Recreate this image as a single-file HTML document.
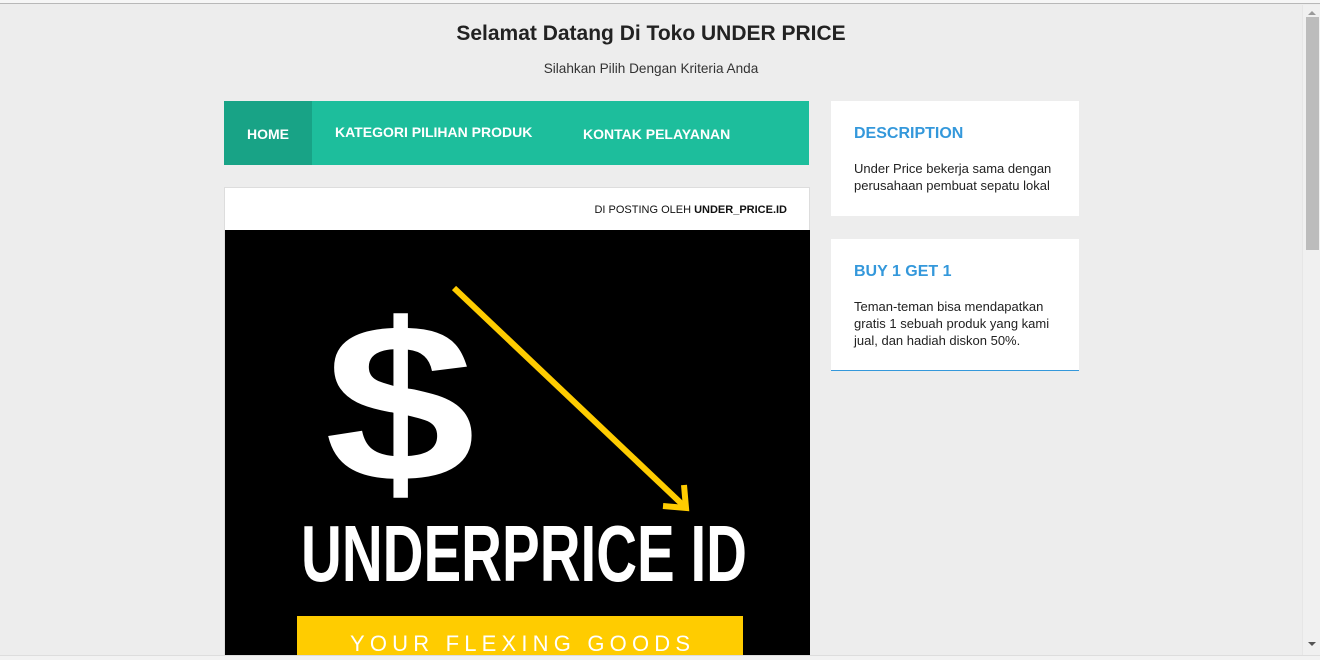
<!DOCTYPE html>
<html><head><meta charset="utf-8"><style>
*{margin:0;padding:0;box-sizing:border-box}
body{width:1320px;height:660px;overflow:hidden;background:#ededed;font-family:"Liberation Sans",Arial,sans-serif;position:relative}
.topbar{position:absolute;left:0;top:0;width:1320px;height:4px;background:#f6f6f6;border-bottom:1px solid #b8b8b8}
.abs{position:absolute}
h1{position:absolute;left:0;width:1302px;top:22px;text-align:center;font-size:21px;font-weight:bold;color:#222}
.sub{position:absolute;left:0;width:1302px;top:61px;text-align:center;font-size:13.6px;color:#333}
.nav{left:224px;top:101px;width:585px;height:64px;background:#1dbe9c;color:#fff;font-weight:bold;font-size:14px}
.nav span{position:absolute}
.home{left:0;top:0;width:88px;height:64px;background:#18a386}
.post{left:224px;top:187px;width:586px;height:470px;background:#fff;border:1px solid #ddd}
.side{background:#fff;left:831px;width:248px;padding:0 22px 0 23px}
.side h3{color:#3498db;font-size:16px;font-weight:bold;margin-top:24px}
.side p{font-size:13px;color:#222;line-height:17px;margin-top:17px}
.sb{left:1302px;top:5px;width:18px;height:650px;background:#f0f0f0;border-left:1px solid #e6e6e6}
</style></head><body>
<div class="topbar"></div>
<h1>Selamat Datang Di Toko UNDER PRICE</h1>
<div class="sub">Silahkan Pilih Dengan Kriteria Anda</div>
<div class="abs nav">
 <div class="abs home"></div>
 <span style="left:23px;top:25px">HOME</span>
 <span style="left:111px;top:23px">KATEGORI PILIHAN PRODUK</span>
 <span style="left:359px;top:25px">KONTAK PELAYANAN</span>
</div>
<div class="abs post">
 <div class="abs" style="right:22px;top:16px;font-size:11px;color:#111">DI POSTING OLEH <b>UNDER_PRICE.ID</b></div>
 <svg class="abs" style="left:0;top:42px" width="585" height="428" viewBox="0 0 585 428">
  <rect width="585" height="428" fill="#000"/>
  <line x1="229" y1="58" x2="459" y2="276" stroke="#ffcc00" stroke-width="6"/>
  <path d="M438 276 L461 278 L459 255" fill="none" stroke="#ffcc00" stroke-width="6"/>
  <text x="0" y="251" transform="translate(175,0) scale(1.2,1)" font-family="Liberation Sans" font-weight="bold" font-size="226" fill="#fff" text-anchor="middle">$</text>
  <text x="76" y="351" font-family="Liberation Sans Narrow,Liberation Sans" font-weight="bold" font-size="80" fill="#fff" textLength="446" lengthAdjust="spacingAndGlyphs">UNDERPRICE ID</text>
  <rect x="72" y="386" width="446" height="42" fill="#ffcc00"/>
  <text x="125" y="421" font-family="Liberation Sans" font-size="22" fill="#fff" textLength="340" lengthAdjust="spacing">YOUR FLEXING GOODS</text>
 </svg>
</div>
<div class="abs side" style="top:101px;height:115px"><h3>DESCRIPTION</h3><p>Under Price bekerja sama dengan perusahaan pembuat sepatu lokal</p></div>
<div class="abs side" style="top:239px;height:132px;border-bottom:1px solid #3498db"><h3>BUY 1 GET 1</h3><p>Teman-teman bisa mendapatkan gratis 1 sebuah produk yang kami jual, dan hadiah diskon 50%.</p></div>
<div class="abs sb">
 <div class="abs" style="left:3px;top:12px;width:13px;height:233px;background:#bcbcbc"></div>
 <div class="abs" style="left:5px;top:6px;width:0;height:0;border-left:4px solid transparent;border-right:4px solid transparent;border-bottom:4px solid #999"></div>
 <div class="abs" style="left:5px;top:637px;width:0;height:0;border-left:4px solid transparent;border-right:4px solid transparent;border-top:4px solid #555"></div>
</div>
<div class="abs" style="left:0;top:655px;width:1320px;height:5px;background:#f2f2f2;border-top:1px solid #ddd"></div>
</body></html>
